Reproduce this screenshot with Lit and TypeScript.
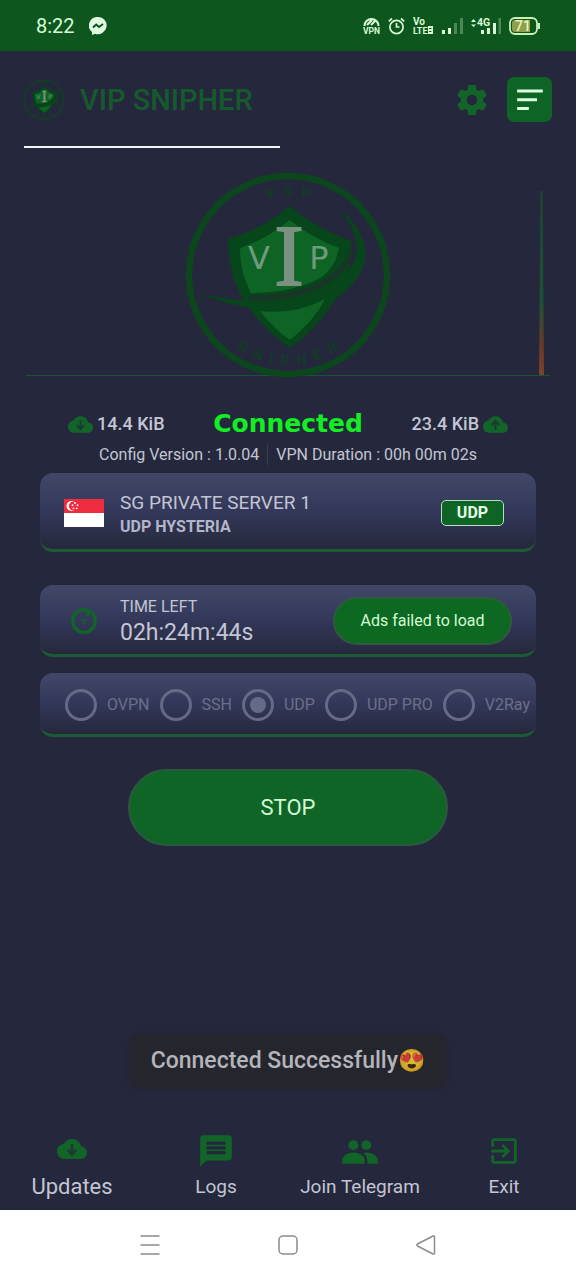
import { LitElement, html, css, svg } from "lit";
import { customElement, property, state } from "lit/decorators.js";
import { classMap } from "lit/directives/class-map.js";

const CLOUD =
  "M19.35 10.04C18.67 6.59 15.64 4 12 4 9.11 4 6.6 5.64 5.35 8.04 2.34 8.36 0 10.91 0 14c0 3.31 2.69 6 6 6h13c2.76 0 5-2.24 5-5 0-2.64-2.05-4.78-4.65-4.96z";

const icons: Record<string, unknown> = {
  cloudDown: svg`<path d=${CLOUD}/><path class="cut" d="M12 8v8M8.5 12.5l3.5 4 3.5-4"/>`,
  cloudUp: svg`<path d=${CLOUD}/><path class="cut" d="M12 17V9M8.5 12.5l3.5-4 3.5 4"/>`,
  gear: svg`<path d="M19.43 12.98c.04-.32.07-.64.07-.98s-.03-.66-.07-.98l2.11-1.65c.19-.15.24-.42.12-.64l-2-3.46c-.12-.22-.39-.3-.61-.22l-2.49 1c-.52-.4-1.08-.73-1.69-.98l-.38-2.65C14.46 2.18 14.25 2 14 2h-4c-.25 0-.46.18-.49.42l-.38 2.65c-.61.25-1.17.59-1.69.98l-2.49-1c-.23-.09-.49 0-.61.22l-2 3.46c-.13.22-.07.49.12.64l2.11 1.65c-.04.32-.07.65-.07.98s.03.66.07.98l-2.11 1.65c-.19.15-.24.42-.12.64l2 3.46c.12.22.39.3.61.22l2.49-1c.52.4 1.08.73 1.69.98l.38 2.65c.03.24.24.42.49.42h4c.25 0 .46-.18.49-.42l.38-2.65c.61-.25 1.17-.59 1.69-.98l2.49 1c.23.09.49 0 .61-.22l2-3.46c.12-.22.07-.49-.12-.64l-2.11-1.65zM12 15.5c-1.93 0-3.5-1.57-3.5-3.5s1.57-3.5 3.5-3.5 3.5 1.57 3.5 3.5-1.57 3.5-3.5 3.5z"/>`,
  chat: svg`<path d="M20 2H4c-1.1 0-1.99.9-1.99 2L2 22l4-4h14c1.1 0 2-.9 2-2V4c0-1.1-.9-2-2-2zM6 9h12v2H6V9zm12 5H6v-2h12v2zm0-6H6V6h12v2z"/>`,
  people: svg`<circle cx="7.8" cy="8.3" r="3.1"/><circle cx="16" cy="8.3" r="3.1"/><path d="M.8 20v-2.2C.8 14.9 4.5 13 7.9 13s7.1 1.9 7.1 4.8V20zM16.6 20h6.6v-2.2c0-2.9-3.7-4.8-7.2-4.8q-1 0-2 .3c1.7 1 2.6 2.5 2.6 4.5z"/>`,
  exit: svg`<path d="M10.09 15.59L11.5 17l5-5-5-5-1.41 1.41L12.67 11H3v2h9.67l-2.58 2.59zM19 3H5c-1.11 0-2 .9-2 2v4h2V5h14v14H5v-4H3v4c0 1.1.89 2 2 2h14c1.1 0 2-.9 2-2V5c0-1.1-.9-2-2-2z"/>`,
  timer: svg`<circle class="ring" cx="12" cy="12" r="9.7"/><path d="M12.5 2.5 18 4l-3 5z"/><path class="hand" d="M9.5 11h4.5l-3.5 4"/>`,
  sort: svg`<path d="M1 3h22v2.6H1zM1 10.5h17v2.6H1zM1 18h10v2.6H1z"/>`,
};

@customElement("ui-icon")
export class UiIcon extends LitElement {
  @property() name = "gear";

  static styles = css`
    :host { display: inline-flex; width: 24px; height: 24px; color: #126528; }
    svg { width: 100%; height: 100%; fill: currentColor; }
    .cut { fill: none; stroke: #1d3a30; stroke-width: 2; }
    .ring { fill: none; stroke: currentColor; stroke-width: 2.8; }
    .hand { fill: none; stroke: currentColor; stroke-width: 1.2; }
  `;

  render() {
    return html`<svg viewBox="0 0 24 24" aria-hidden="true">${icons[this.name]}</svg>`;
  }
}

@customElement("vip-logo")
export class VipLogo extends LitElement {
  static styles = css`
    :host { display: block; }
    svg { display: block; width: 100%; height: 100%; }
    .ring { fill: none; stroke: #0c461c; stroke-width: 6.5; }
    .dark { fill: #07461a; }
    .light { fill: #0d6425; }
    .gap { fill: none; stroke: #183527; stroke-width: 5; }
    .arc { font: 700 14px "Liberation Sans", sans-serif; fill: #133c26; text-anchor: middle; }
    .letter { font: 400 32px "DejaVu Sans", sans-serif; fill: #6f9a7c; text-anchor: middle; }
    .tall { font: 400 87px "Liberation Serif", serif; fill: #7c9082; stroke: #7c9082; stroke-width: 2; text-anchor: middle; }
  `;

  render() {
    return html`<svg viewBox="0 0 206 206" role="img" aria-label="VIP Snipher logo">
      <defs>
        <path id="top" d="M24 103a79 79 0 0 1 158 0" />
        <path id="bottom" d="M13 103a90 90 0 0 0 180 0" />
      </defs>
      <circle class="ring" cx="103" cy="103" r="99" />
      <text class="arc"><textPath href="#top" startOffset="50%">V&#160; S&#160; P</textPath></text>
      <text class="arc"><textPath href="#bottom" startOffset="50%">S&#160; N&#160; I&#160; P&#160; H&#160; E&#160; R</textPath></text>
      <path class="dark" d="M104.5 34Q132 57 166 69Q168 104 147 133Q130 158 105 176Q80 159 63 135Q44 108 43 67Q78 57 104.5 34Z" />
      <path class="light" d="M104.5 48Q127 66 154 76Q151 94 137 105Q108 121 66 121Q55 101 55 76Q82 67 104.5 48Z" />
      <path class="gap" d="M64 126Q112 127 140 110Q162 97 167 78" />
      <path class="dark" d="M14 121Q52 131 95 130Q137 122 163 99Q184 76 155 36Q194 73 173 105Q151 137 103 139Q60 140 14 121Z" />
      <path class="light" d="M75 139Q110 143 140 127Q129 149 105 168Q89 157 75 139Z" />
      <text class="letter" x="74" y="97">V</text>
      <text class="tall" x="104" y="113">I</text>
      <text class="letter" x="134" y="97">P</text>
    </svg>`;
  }
}

@customElement("app-root")
export class AppRoot extends LitElement {
  @state() private protocol = "UDP";

  private protocols = ["OVPN", "SSH", "UDP", "UDP PRO", "V2Ray"];
  private tabs = [
    { icon: "cloudDown", label: "Updates", active: true },
    { icon: "chat", label: "Logs", active: false },
    { icon: "people", label: "Join Telegram", active: false },
    { icon: "exit", label: "Exit", active: false },
  ];

  static styles = css`
    * { box-sizing: border-box; }
    :host {
      display: flex; flex-direction: column; min-height: 100vh; position: relative;
      background: #25283c; color: #c3c5d3;
      font: 400 16px/20px Roboto, sans-serif;
    }
    button { font: inherit; color: inherit; border: 0; padding: 0; background: none; cursor: pointer; }
    svg { display: block; }

    .status {
      display: flex; align-items: center; gap: 14px; height: 51px; padding: 0 36px;
      background: #0d561e; color: #d9fbd8; font-size: 20px;
    }
    .status .right { display: flex; align-items: center; gap: 8px; margin-left: auto; }
    .status text { font-family: Roboto, sans-serif; font-weight: 700; fill: #d9fbd8; }
    .status text.level { font-size: 14px; font-weight: 500; fill: #e7f3bd; }

    .head { display: flex; align-items: center; padding: 26px 24px 24px; }
    .head vip-logo { width: 40px; height: 40px; }
    h1 { margin: 0 auto 0 16px; font: 500 29px/40px Roboto, sans-serif; color: #155a2c; }
    .gear { display: flex; margin-right: 17px; }
    .gear ui-icon { width: 36px; height: 36px; }
    .menu { display: grid; place-items: center; width: 45px; height: 45px; border-radius: 7px; background: #0d6425; }
    .menu ui-icon { width: 28px; height: 28px; color: #dcffe0; }
    .tabline { width: 256px; height: 2px; margin-left: 24px; background: #f4f4f8; }

    .hero { display: grid; padding: 24px 26px 0; }
    .hero > * { grid-area: 1 / 1; }
    .hero vip-logo { width: 206px; height: 206px; justify-self: center; }
    .chart { display: flex; justify-content: flex-end; align-items: flex-end; margin-bottom: 2px; padding-right: 6px; border-bottom: 1px solid #1d5135; }
    .peak { width: 5px; height: 184px; }

    .traffic { display: grid; grid-template-columns: 1fr auto 1fr; align-items: center; margin-top: 31px; padding: 0 68px; height: 30px; }
    .amount { display: flex; align-items: center; gap: 4px; font-size: 18px; font-weight: 500; }
    .amount ui-icon { width: 25px; height: 25px; }
    .amount.up { justify-content: flex-end; }
    .state { font: 700 25px/30px "DejaVu Sans", sans-serif; color: #12ee22; }
    .info { display: flex; justify-content: center; gap: 8px; margin: 6px 0 8px; }
    .info span + span { padding-left: 8px; border-left: 1px solid #3b3e51; }

    .stack { display: flex; flex-direction: column; padding: 0 40px; }
    .card {
      display: flex; align-items: center; padding: 2px 24px 0;
      border-bottom: 3px solid #1d5b34; border-radius: 13px;
      background: linear-gradient(#414867, #33385a 50%, #25283c);
    }
    .server { height: 79px; padding: 4px 32px 0 24px; margin-bottom: 33px; }
    .time { height: 72px; margin-bottom: 16px; }
    .modes { height: 64px; gap: 10px; padding: 2px 0 0 25px; white-space: nowrap; }
    .lines { flex: 1; margin-left: 16px; }
    .name { font-size: 19px; line-height: 24px; }
    .server .lines { padding-top: 4px; }
    .sub { font-weight: 700; line-height: 24px; color: #b3b6c9; }
    .left { font-size: 23px; line-height: 28px; }
    .time .lines div:first-child { line-height: 24px; }
    .flag { width: 40px; height: 28px; }
    .tag { display: grid; place-items: center; width: 63px; height: 26px; border: 1px solid #b9dcc4; border-radius: 5px; background: #0d6425; color: #e4ffe6; font-weight: 700; }
    .time ui-icon { width: 28px; height: 28px; margin: 0 6px; }
    .ads { width: 179px; height: 48px; border: 2px solid #2f5a3c; border-radius: 24px; background: #0d6822; color: #d3fbd3; }
    .mode { display: flex; align-items: center; gap: 10px; color: #6b6f89; }
    .mode input {
      appearance: none; width: 32px; height: 32px; margin: 0; border: 3px solid #656a86; border-radius: 50%;
      display: grid; place-items: center;
    }
    .mode input:checked::before { content: ""; width: 16px; height: 16px; border-radius: 50%; background: #656a86; }
    .stop {
      align-self: center; width: 320px; height: 77px; margin-top: 32px; border: 2px solid #2c5840; border-radius: 39px;
      background: #0f6525; color: #d3fbd3; font-size: 22px;
    }

    .toast {
      position: absolute; left: 50%; bottom: 192px; transform: translateX(-50%);
      padding: 14px 20px; border-radius: 8px; background: #24252d; box-shadow: 0 0 5px #24252d;
      color: #b4b5ba; font-size: 23px; font-weight: 500; line-height: 26px; white-space: nowrap;
      display: flex; align-items: center;
    }
    .emoji { font-family: "Noto Color Emoji", sans-serif; font-size: 22px; opacity: 0.8; }

    .tabs { display: grid; grid-template-columns: repeat(4, 1fr); margin-top: auto; padding-bottom: 10px; }
    .tab { display: flex; flex-direction: column; align-items: center; gap: 4px; font-size: 19px; line-height: 26px; }
    .tab ui-icon { width: 38px; height: 38px; }
    .tab.active { font-size: 22px; }
    .tab.active ui-icon { width: 30px; height: 30px; margin: 2px 0 6px; }
    .tab.last ui-icon { width: 34px; height: 34px; margin: 2px 0; }
    .system { display: flex; justify-content: center; gap: 110px; height: 70px; background: #fff; }
    .system svg { width: 28px; height: 28px; fill: none; stroke: #8c8c8c; stroke-width: 1.5; stroke-linejoin: round; }
  `;

  private statusBar() {
    return html`<div class="status">
      <span>8:22</span>
      <svg width="18" height="18" viewBox="0 0 18 18">
        <path fill="#dffbe0" d="M9 0a8.7 8.6 0 1 1-3 16.700L3 18v-3A8.5 8.5 0 0 1 9 0z" />
        <path fill="none" stroke="#0d561e" stroke-width="2" d="M4 10.5 7.2 7.5 10 10l4-3" />
      </svg>
      <div class="right">
        <svg width="17" height="18" viewBox="0 0 17 18">
          <path fill="none" stroke="#d9fbd8" stroke-width="2" d="M1.5 9a7 7 0 0 1 14 0M4 8 9 3M8 8l4-4" />
          <text x="0" y="17" font-size="8.5">VPN</text>
        </svg>
        <svg width="17" height="18" viewBox="0 0 17 18" fill="none" stroke="#d9fbd8" stroke-width="1.7">
          <circle cx="8.5" cy="10" r="6.6" /><path d="M8.5 6v4h3M.8 4.3 4 1.5M16.2 4.3 13 1.5" />
        </svg>
        <svg width="20" height="18" viewBox="0 0 20 18">
          <text x="0" y="8" font-size="10">Vo</text><text x="0" y="17" font-size="9">LTE</text>
          <rect x="15" y="9" width="5" height="8" fill="#d9fbd8" /><path stroke="#0d561e" d="M16 11.5h2.5M16 14.5h2.5" />
        </svg>
        <svg width="22" height="18" viewBox="0 0 22 18" fill="#d9fbd8">
          <path d="M1 13h3v4H1zM7 11h3v6H7z" /><path opacity=".3" d="M13 6h3v11h-3zM19 1h3v16h-3z" />
        </svg>
        <svg width="30" height="18" viewBox="0 0 30 18" fill="#d9fbd8">
          <path d="M0 5 2.5 2 5 5zM0 7.5 2.5 10 5 7.5zM10 13h3v4h-3zM16 11h3v6h-3zM22 6h3v11h-3z" />
          <path opacity=".3" d="M27.5 1H30v16h-2.5z" /><text x="6" y="9" font-size="10.5">4G</text>
        </svg>
        <svg width="31" height="18" viewBox="0 0 31 18">
          <rect x="1" y="1" width="27" height="16" rx="5" fill="none" stroke="#cdf0b8" stroke-width="1.8" />
          <path fill="#8fa04c" d="M6 3h15v12H6a3 3 0 0 1-3-3V6a3 3 0 0 1 3-3z" /><path fill="#cdf0b8" d="M29 6h2v6h-2z" />
          <text class="level" x="6" y="14">71</text>
        </svg>
      </div>
    </div>`;
  }

  render() {
    return html`
      ${this.statusBar()}
      <header class="head">
        <vip-logo></vip-logo>
        <h1>VIP SNIPHER</h1>
        <button class="gear" aria-label="Settings"><ui-icon name="gear"></ui-icon></button>
        <button class="menu" aria-label="Menu"><ui-icon name="sort"></ui-icon></button>
      </header>
      <div class="tabline"></div>
      <section class="hero">
        <div class="chart">
          <svg class="peak" viewBox="0 0 5 184" preserveAspectRatio="none">
            <defs><linearGradient id="heat" x2="0" y2="1">
              <stop offset="0" stop-color="#174a30" /><stop offset=".6" stop-color="#1d5135" /><stop offset=".85" stop-color="#6b3a2a" /><stop offset="1" stop-color="#7a4228" />
            </linearGradient></defs>
            <path fill="url(#heat)" d="M1.5 0h2L5 184H0z" />
          </svg>
        </div>
        <vip-logo></vip-logo>
      </section>
      <section class="traffic">
        <div class="amount"><ui-icon name="cloudDown"></ui-icon>14.4 KiB</div>
        <div class="state">Connected</div>
        <div class="amount up">23.4 KiB<ui-icon name="cloudUp"></ui-icon></div>
      </section>
      <div class="info"><span>Config Version : 1.0.04</span><span>VPN Duration : 00h 00m 02s</span></div>
      <main class="stack">
        <section class="card server">
          <svg class="flag" viewBox="0 0 40 28" role="img" aria-label="Singapore">
            <path fill="#fff" d="M0 0h40v28H0z" /><path fill="#ee2b3f" d="M0 0h40v14H0z" />
            <circle cx="7.5" cy="7" r="5" fill="#fff" /><circle cx="9.5" cy="7" r="4.6" fill="#ee2b3f" />
            <g fill="#fff"><circle cx="11" cy="4" r=".9" /><circle cx="8.5" cy="6.2" r=".9" /><circle cx="13.5" cy="6.2" r=".9" /><circle cx="9.5" cy="9.3" r=".9" /><circle cx="12.7" cy="9.3" r=".9" /></g>
          </svg>
          <div class="lines"><div class="name">SG PRIVATE SERVER 1</div><div class="sub">UDP HYSTERIA</div></div>
          <span class="tag">UDP</span>
        </section>
        <section class="card time">
          <ui-icon name="timer"></ui-icon>
          <div class="lines"><div>TIME LEFT</div><div class="left">02h:24m:44s</div></div>
          <button class="ads">Ads failed to load</button>
        </section>
        <div class="card modes" role="radiogroup" aria-label="Protocol">
          ${this.protocols.map((p) => html`<label class="mode">
            <input type="radio" name="protocol" disabled .checked=${p === this.protocol} />${p}
          </label>`)}
        </div>
        <button class="stop">STOP</button>
      </main>
      <nav class="tabs">
        ${this.tabs.map((t) => html`<button class=${classMap({ tab: true, active: t.active, last: t.icon === "exit" })}>
          <ui-icon name=${t.icon}></ui-icon>${t.label}
        </button>`)}
      </nav>
      <div class="system">
        <button aria-label="Recent"><svg viewBox="0 0 28 28"><path d="M4.5 5h19M4.5 14h19M4.5 23h19" /></svg></button>
        <button aria-label="Home"><svg viewBox="0 0 28 28"><rect x="5" y="5" width="18" height="18" rx="4" /></svg></button>
        <button aria-label="Back"><svg viewBox="0 0 28 28"><path d="M22.5 6v16q0 1.5-1.5 1L5.5 15q-1.5-1 0-2L21 5q1.5-.5 1.5 1z" /></svg></button>
      </div>
      <div class="toast" role="status">Connected Successfully<span class="emoji">😍</span></div>
    `;
  }
}
